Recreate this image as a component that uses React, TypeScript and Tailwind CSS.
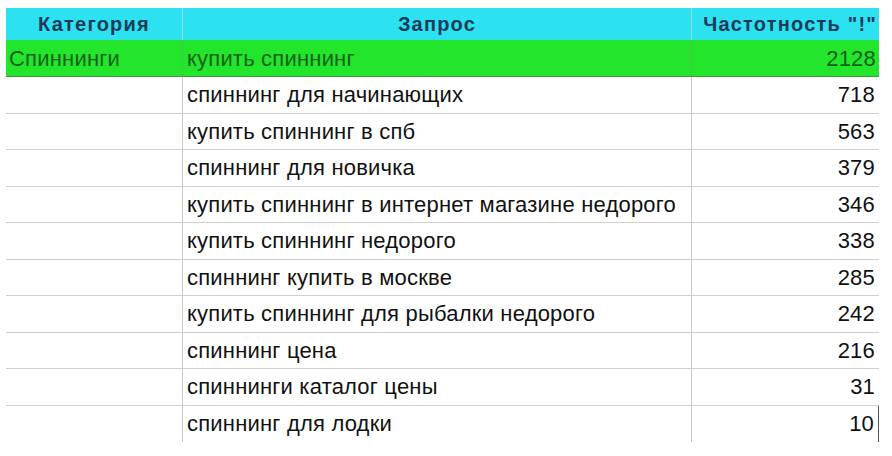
import React from "react";

const rows: [string, string, string][] = [
  ["", "спиннинг для начинающих", "718"],
  ["", "купить спиннинг в спб", "563"],
  ["", "спиннинг для новичка", "379"],
  ["", "купить спиннинг в интернет магазине недорого", "346"],
  ["", "купить спиннинг недорого", "338"],
  ["", "спиннинг купить в москве", "285"],
  ["", "купить спиннинг для рыбалки недорого", "242"],
  ["", "спиннинг цена", "216"],
  ["", "спиннинги каталог цены", "31"],
  ["", "спиннинг для лодки", "10"],
];

export default function App() {
  return (
    <div
      className="w-[892px] h-[456px] bg-white pt-[8px] pl-[6px]"
      style={{ fontFamily: '"Liberation Sans", Arial, sans-serif' }}
    >
      <div className="w-[873px]">
        <div className="grid grid-cols-[176px_509px_188px] h-[32px] bg-[#2ce2f1] text-[#1b3b5a] font-bold text-[20px] tracking-[1.2px]">
          <div className="flex items-center justify-center">Категория</div>
          <div className="flex items-center justify-center border-l border-[#9fd6dc]">Запрос</div>
          <div className="flex items-center justify-end pr-[2px] border-l border-[#9fd6dc]">Частотность "!"</div>
        </div>
        <div className="grid grid-cols-[176px_509px_188px] h-[37px] bg-[#22e52c] text-[#14621a] text-[22px] tracking-[0.2px] border-b border-[#3a9a40]">
          <div className="flex items-center pl-[3px]">Спиннинги</div>
          <div className="flex items-center pl-[4px] border-l border-[#45c64a]">купить спиннинг</div>
          <div className="flex items-center justify-end pr-[3px] border-l border-[#45c64a]">2128</div>
        </div>
        {rows.map((r, i) => {
          const last = i === rows.length - 1;
          return (
            <div
              key={i}
              className={
                last
                  ? "grid grid-cols-[176px_509px_188px] h-[36.5px] text-[#111] text-[22px] tracking-[0.2px]"
                  : "grid grid-cols-[176px_509px_188px] h-[36.5px] text-[#111] text-[22px] tracking-[0.2px] border-b border-[#cfcfcf]"
              }
            >
              <div className="flex items-center">{r[0]}</div>
              <div className="flex items-center pl-[4px] border-l border-[#c8c8c8]">{r[1]}</div>
              <div
                className={
                  last
                    ? "flex items-center justify-end pr-[4px] border-l border-[#c8c8c8] border-r border-r-[#555]"
                    : "flex items-center justify-end pr-[4px] border-l border-[#c8c8c8]"
                }
              >
                {r[2]}
              </div>
            </div>
          );
        })}
      </div>
    </div>
  );
}
